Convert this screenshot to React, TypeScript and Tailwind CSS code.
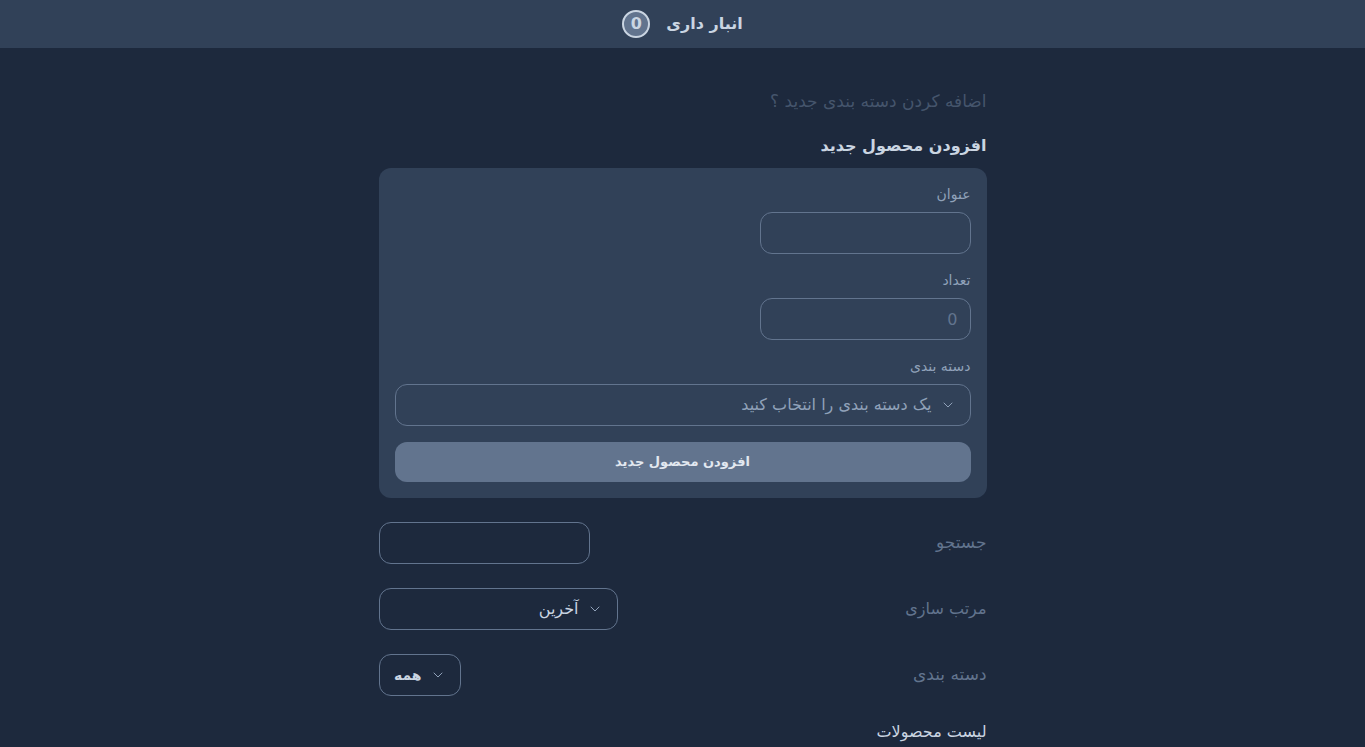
import React from 'react';
import { ChevronDown } from 'lucide-react';

const font = { fontFamily: '"DejaVu Sans", sans-serif' };

const Field: React.FC<{ label: string; children: React.ReactNode }> = ({ label, children }) => (
  <div className="mb-4">
    <label className="block text-sm leading-5 text-slate-400 mb-2">{label}</label>
    {children}
  </div>
);

const SelectBox: React.FC<{ value: string; width: string; textClass?: string }> = ({ value, width, textClass }) => (
  <div className={`${width} h-[42px] flex items-center gap-2 pr-[14px] rounded-xl border border-slate-500`}>
    <ChevronDown className="w-4 h-4 text-slate-400" strokeWidth={1.5} />
    <span className={textClass || 'text-base text-slate-300'}>{value}</span>
  </div>
);

export default function App() {
  return (
    <div dir="rtl" className="min-h-screen bg-slate-800" style={font}>
      <header className="h-12 bg-slate-700 flex items-center justify-center gap-4">
        <h1 className="text-base font-bold text-slate-300">انبار داری</h1>
        <span className="w-7 h-7 rounded-full bg-slate-500 border-2 border-slate-300 flex items-center justify-center text-base font-bold text-slate-300">
          0
        </span>
      </header>

      <main className="max-w-screen-sm mx-auto px-4 pt-[41px]">
        <p className="text-[17px] leading-6 text-slate-600 mb-[19px]">اضافه کردن دسته بندی جدید ؟</p>
        <h2 className="text-base leading-7 font-bold text-slate-300 mb-2">افزودن محصول جدید</h2>

        <form className="bg-slate-700 rounded-xl p-4 mb-6">
          <Field label="عنوان">
            <input type="text" className="w-[211px] h-[42px] rounded-xl border border-slate-500 bg-transparent px-3 text-slate-300 outline-none" />
          </Field>
          <Field label="تعداد">
            <input
              type="number"
              placeholder="0"
              className="w-[211px] h-[42px] rounded-xl border border-slate-500 bg-transparent px-3 text-slate-300 placeholder:text-slate-500 outline-none"
            />
          </Field>
          <Field label="دسته بندی">
            <SelectBox value="یک دسته بندی را انتخاب کنید" width="w-full" textClass="text-base text-slate-400" />
          </Field>
          <button type="button" className="w-full h-10 rounded-xl bg-slate-500 text-[13px] font-bold text-slate-200">
            افزودن محصول جدید
          </button>
        </form>

        <div className="flex items-center justify-between mb-6">
          <span className="text-[17px] text-slate-500">جستجو</span>
          <input type="text" className="w-[211px] h-[42px] rounded-xl border border-slate-500 bg-transparent px-3 text-slate-300 outline-none" />
        </div>
        <div className="flex items-center justify-between mb-6">
          <span className="text-slate-500">مرتب سازی</span>
          <SelectBox value="آخرین" width="w-[239px]" />
        </div>
        <div className="flex items-center justify-between mb-6">
          <span className="text-[17px] text-slate-500">دسته بندی</span>
          <SelectBox value="همه" width="w-[82px]" textClass="text-sm font-bold text-slate-300" />
        </div>
        <h3 className="text-slate-300">لیست محصولات</h3>
      </main>
    </div>
  );
}
